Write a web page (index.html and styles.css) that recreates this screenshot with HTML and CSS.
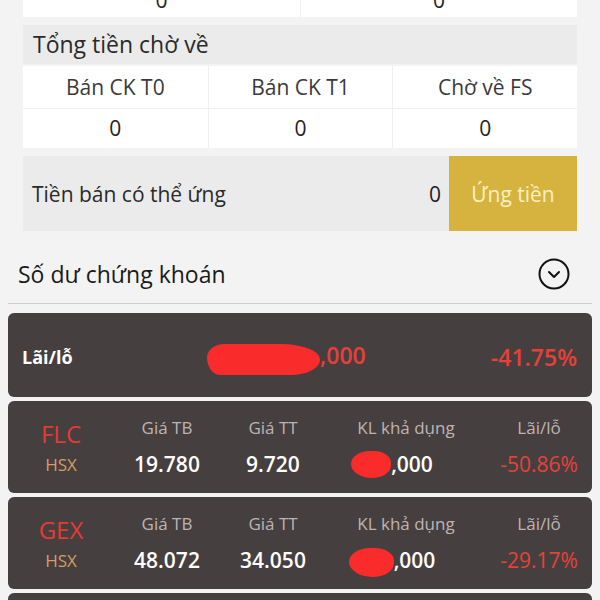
FILE: index.html
```html
<!DOCTYPE html>
<html lang="vi">
<head>
    <meta charset="UTF-8">
    <title>Tài sản</title>
    <link rel="stylesheet" href="styles.css">
</head>
<body>
    <div class="page">
        <div class="box">
            <div class="grid two top-row">
                <div class="cell">0</div>
                <div class="cell">0</div>
            </div>

            <div class="box-title">Tổng tiền chờ về</div>
            <div class="grid three">
                <div class="cell head">Bán CK T0</div>
                <div class="cell head">Bán CK T1</div>
                <div class="cell head">Chờ về FS</div>
                <div class="cell val">0</div>
                <div class="cell val">0</div>
                <div class="cell val">0</div>
            </div>

            <div class="advance">
                <span class="advance-label">Tiền bán có thể ứng</span>
                <span class="advance-num">0</span>
                <span class="advance-btn">Ứng tiền</span>
            </div>
        </div>

        <div class="section-head">
            <span>Số dư chứng khoán</span>
            <svg class="toggle" width="32" height="32" viewBox="0 0 32 32">
                <circle cx="16" cy="16" r="14.5" fill="none" stroke="#111" stroke-width="2"/>
                <path d="M11 14 L16 19 L21 14" fill="none" stroke="#111" stroke-width="2" stroke-linecap="round" stroke-linejoin="round"/>
            </svg>
        </div>

        <div class="card total">
            <span class="total-label">Lãi/lỗ</span>
            <span class="red big"><i class="blob wide"></i>,000</span>
            <span class="red big pct">-41.75%</span>
        </div>

        <div class="card stock">
            <div class="col sym">
                <span class="code">FLC</span>
                <span class="exch">HSX</span>
            </div>
            <div class="col"><span class="lbl">Giá TB</span><span class="num">19.780</span></div>
            <div class="col"><span class="lbl">Giá TT</span><span class="num">9.720</span></div>
            <div class="col"><span class="lbl">KL khả dụng</span><span class="num qty"><i class="blob"></i>,000</span></div>
            <div class="col"><span class="lbl">Lãi/lỗ</span><span class="num red">-50.86%</span></div>
        </div>

        <div class="card stock">
            <div class="col sym">
                <span class="code">GEX</span>
                <span class="exch">HSX</span>
            </div>
            <div class="col"><span class="lbl">Giá TB</span><span class="num">48.072</span></div>
            <div class="col"><span class="lbl">Giá TT</span><span class="num">34.050</span></div>
            <div class="col"><span class="lbl">KL khả dụng</span><span class="num qty"><i class="blob big-blob"></i>,000</span></div>
            <div class="col"><span class="lbl">Lãi/lỗ</span><span class="num red">-29.17%</span></div>
        </div>

        <div class="card stock"></div>
    </div>
</body>
</html>
```

FILE: styles.css
```css
*{
    margin:0;
    padding:0;
    box-sizing:border-box;
}
body{
    background:#f3f3f3;
    font-family:"Open Sans", "Noto Sans", sans-serif;
    color:#333;
    overflow:hidden;
}
.page{
    padding:0 8px;
}
.box{
    padding:0 15px;
}
.grid{
    display:grid;
    background:#fff;
}
.grid.two{
    grid-template-columns:1fr 1fr;
}
.grid.three{
    grid-template-columns:1fr 1fr 1fr;
}
.cell{
    text-align:center;
    font-size:21px;
    color:#3a3a3a;
    border-left:1px solid #efefef;
}
.cell:nth-child(3n+1){
    border-left:0;
}
.top-row{
    height:40px;
    margin-top:-23px;
    overflow:hidden;
}
.top-row .cell{
    line-height:24px;
    padding-top:11px;
    color:#222;
}
.top-row .cell + .cell{
    border-left:1px solid #efefef;
}
.box-title{
    margin-top:8px;
    height:41px;
    line-height:39px;
    background:#ebebeb;
    padding-left:10px;
    font-size:23px;
    color:#2a2a2a;
    border-bottom:2px solid #f3f3f3;
}
.cell.head{
    height:43px;
    line-height:43px;
    border-bottom:1px solid #efefef;
}
.cell.val{
    height:39px;
    line-height:39px;
    color:#222;
}
.advance{
    margin-top:8px;
    height:75px;
    display:flex;
    align-items:center;
    background:#ebebeb;
    font-size:21px;
}
.advance-label{
    padding-left:9px;
    flex:1;
    color:#2a2a2a;
}
.advance-num{
    padding-right:8px;
    color:#222;
}
.advance-btn{
    width:128px;
    height:100%;
    display:flex;
    align-items:center;
    justify-content:center;
    background:#d5b33e;
    color:#faf0c4;
    font-size:21px;
}
.section-head{
    height:73px;
    display:flex;
    align-items:center;
    justify-content:space-between;
    padding:14px 22px 0 10px;
    font-size:23px;
    color:#1a1a1a;
    border-bottom:1px solid #cfcfcf;
}
.toggle{
    display:block;
}
.card{
    background:#463f3f;
    border-radius:6px;
    margin-top:4px;
    color:#fff;
}
.total{
    margin-top:9px;
    height:84px;
    display:flex;
    align-items:center;
    padding:4px 15px 0 14px;
}
.total-label{
    width:185px;
    font-size:18px;
    font-weight:700;
}
.red{
    color:#e5413a;
}
.big{
    font-size:23px;
    font-weight:600;
}
.pct{
    margin-left:auto;
}
.blob{
    display:inline-block;
    vertical-align:middle;
    width:40px;
    height:27px;
    margin-top:-4px;
    background:#fa2b2b;
    border-radius:50% 45% 50% 55%;
}
.blob.wide{
    width:113px;
    height:31px;
    margin-top:2px;
    border-radius:18px 40px 30px 14px / 14px 16px 16px 18px;
}
.blob.big-blob{
    width:45px;
    height:29px;
    margin-top:0;
}
.stock{
    height:92px;
    display:grid;
    grid-template-columns:106px 106px 106px 160px 106px;
    align-items:start;
    padding-top:14px;
}
.col{
    display:flex;
    flex-direction:column;
    align-items:center;
}
.lbl{
    font-size:17px;
    color:#bdb4b4;
    line-height:26px;
}
.num{
    font-size:21px;
    font-weight:600;
    line-height:26px;
    margin-top:10px;
    white-space:nowrap;
}
.num.qty{
    padding-right:28px;
}
.num.red{
    font-weight:400;
    color:#e5413a;
}
.sym .code{
    font-size:24px;
    font-weight:500;
    color:#e53a33;
    line-height:30px;
    margin-top:4px;
}
.sym .exch{
    font-size:17px;
    color:#d69c62;
    line-height:24px;
    margin-top:4px;
}
```
